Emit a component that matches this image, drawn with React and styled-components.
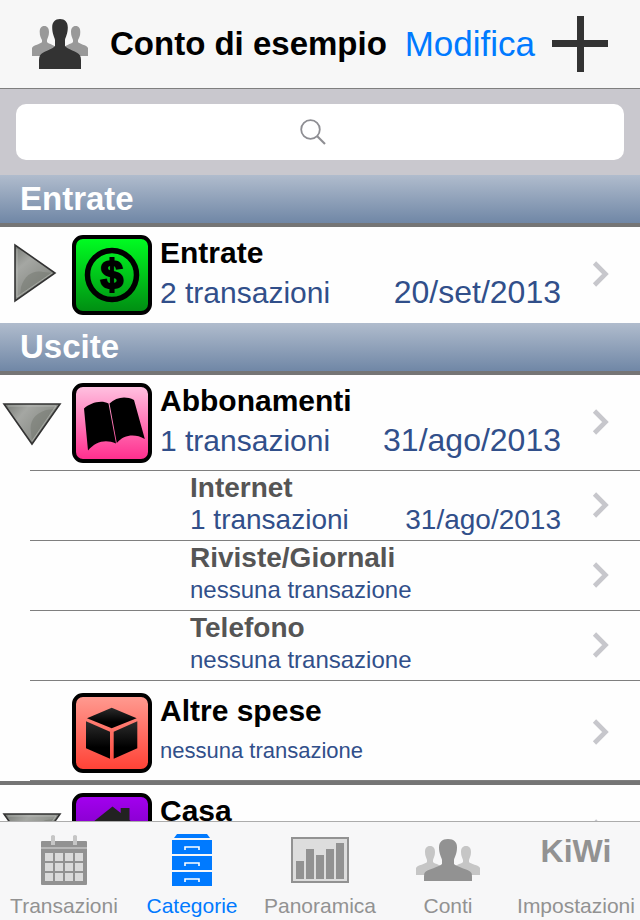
import React from "react";
import styled, { createGlobalStyle, css } from "styled-components";

const GlobalStyle = createGlobalStyle`
* { box-sizing: border-box; }
body {
  margin: 0;
  background: #fefefe;
  font-family: "Liberation Sans", Arial, Helvetica, sans-serif;
}
a { color: inherit; text-decoration: none; }
button {
  padding: 0;
  border: 0;
  background: none;
  font: inherit;
  color: inherit;
  cursor: pointer;
}
svg { display: block; flex: none; }
`;

const Page = styled.div`
display: flex;
flex-direction: column;
height: 100vh;
`;

const Header = styled.header`
display: flex;
align-items: center;
flex: none;
height: 89px;
padding: 0 32px;
background: #f7f7f7;
border-bottom: 1px solid #7f7f7f;
`;

const Title = styled.h1`
flex: 1;
margin: 0 0 0 22px;
font-size: 33px;
line-height: 38px;
white-space: nowrap;
`;

const EditButton = styled.button`
margin-right: 17px;
color: #007aff;
font-size: 35px;
line-height: 38px;
`;

const Content = styled.main`
flex: 1;
min-height: 0;
overflow-y: auto;
scrollbar-width: none;
`;

const SearchBar = styled.form`
padding: 15px 16px;
background: #c9c8ce;
`;

const SearchField = styled.label`
display: grid;
place-items: center;
height: 56px;
background: #fff;
border-radius: 10px;

> * { grid-area: 1 / 1; }
> svg { margin-right: 14px; }
`;

const SearchInput = styled.input`
width: 100%;
height: 100%;
padding: 0 16px;
border: 0;
outline: none;
background: transparent;
font: inherit;
font-size: 28px;
`;

const SectionTitle = styled.h2`
margin: 0;
padding-left: 20px;
height: 52px;
background: linear-gradient(#b0bccd, #7087a6);
background-clip: padding-box;
border-bottom: 4px solid #757575;
color: #fff;
font-size: 33px;
line-height: 48px;
`;

const List = styled.ul`
margin: 0;
padding: 0;
list-style: none;
`;

const Item = styled.li`
&::after {
  content: "";
  display: block;
  height: 1px;
  margin-left: 30px;
  background: ${props => (props.$last ? "transparent" : "#7f7f7f")};
}

${props => props.$group && css`
border-bottom: 4px solid #757575;
`}
`;

const Row = styled.div`
display: flex;
align-items: center;
padding: ${props => (props.$tall ? "12px" : "8px")} 30px 7px 0;
`;

const SubRow = styled.a`
display: flex;
align-items: center;
gap: 31px;
height: 69px;
padding: 1px 30px 0 190px;
`;

const Toggle = styled.button`
width: 64px;
height: 64px;
margin: 0 8px 4px 0;
visibility: ${props => (props.$hidden ? "hidden" : "visible")};

svg { transform: ${props => (props.$open ? "rotate(90deg) scaleY(-1)" : "none")}; }
`;

const RowLink = styled.a`
display: flex;
align-items: center;
flex: 1;
min-width: 0;
`;

const Info = styled.div`
flex: 1;
align-self: flex-start;
min-width: 0;
margin: 0 31px 0 8px;
`;

const SubInfo = styled.div`
flex: 1;
align-self: flex-start;
min-width: 0;
`;

const Name = styled.div`
color: #000;
font-size: 30px;
font-weight: bold;
line-height: 36px;
`;

const SubName = styled(Name)`
color: #555;
font-size: 28px;
line-height: 32px;
`;

const Detail = styled.div`
display: flex;
align-items: baseline;
justify-content: space-between;
color: #314f8a;
font-size: ${props => (props.$empty ? "22px" : "30px")};
line-height: ${props => (props.$empty ? "44px" : "42px")};
white-space: nowrap;
`;

const SubDetail = styled(Detail)`
font-size: ${props => (props.$empty ? "24px" : "28px")};
line-height: 32px;
`;

const DateText = styled.time`
font-size: 32px;
`;

const SubDate = styled.time`
font-size: 28px;
`;

const TabBar = styled.nav`
display: grid;
grid-template-columns: repeat(5, 1fr);
flex: none;
background: #f7f7f8;
border-top: 1px solid #acacac;
`;

const Tab = styled.a`
display: flex;
flex-direction: column;
align-items: center;
padding: 4px 0 2px;
color: ${props => (props.$active ? "#007aff" : "#929292")};
font-size: 21px;
line-height: 24px;
`;

const TabIcon = styled.span`
display: flex;
align-items: center;
justify-content: center;
height: 68px;
`;

const Wordmark = styled.span`
padding-bottom: 18px;
font-size: 32px;
font-weight: bold;
line-height: 32px;
`;

const AccountsIcon = () => (
  <svg width="56" height="50" viewBox="0 0 56 50" aria-hidden="true">
    <g fill="#999">
      <path d="M12.3 7C15.500 7 17 9.500 17 13C17 17 15.500 19 15 21V23C16 25 25 26 25 31V37H0V29C1 26 9 25 10 23V21C9 19 7.700 17 7.700 13C7.700 9.500 9 7 12.300 7Z" />
      <path d="M43.700 7C40.500 7 39 9.500 39 13C39 17 40.500 19 41 21V23C40 25 31 26 31 31V37H56V29C55 26 47 25 46 23V21C47 19 48.300 17 48.300 13C48.300 9.500 47 7 43.700 7Z" />
    </g>
    <path fill="#333" d="M28 0C33 0 35.800 3 35.800 8.500C35.800 15 33.500 18 33 21V27C34.500 30 46 32.500 48 36.500Q49 38 49 41V50H7V41Q7 38 8 36.500C10 32.500 21.500 30 23 27V21C22.500 18 20.200 15 20.200 8.500C20.200 3 23 0 28 0Z" />
  </svg>
);

const PlusIcon = () => (
  <svg width="56" height="56" viewBox="0 0 56 56" aria-hidden="true">
    <path fill="#333" d="M25 0h7v24h24v7H32v25h-7V31H0v-7h25z" />
  </svg>
);

const SearchIcon = () => (
  <svg width="26" height="26" viewBox="0 0 26 26" fill="none" stroke="#8e8e93" strokeWidth="1.8" aria-hidden="true">
    <circle cx="10.500" cy="10.500" r="9.300" />
    <path d="M17 17L25 25" strokeWidth="2.200" />
  </svg>
);

const TriangleIcon = () => (
  <svg width="64" height="64" viewBox="0 0 64 64" aria-hidden="true">
    <defs>
      <linearGradient id="triangle" x1="0" y1="0" x2="0.6" y2="1">
        <stop offset="0" stopColor="#777a75" />
        <stop offset="0.35" stopColor="#a5a7a3" />
        <stop offset="1" stopColor="#7e817b" />
      </linearGradient>
    </defs>
    <path d="M15 4V60L55 32Z" fill="url(#triangle)" stroke="#333" strokeWidth="1.600" />
    <path d="M21 46C25 34 33 29 43 31L53 32L20 55Z" fill="#73776f" opacity="0.500" />
    <path d="M17 8V56L52 32" fill="none" stroke="#c4c6c2" strokeWidth="0.800" opacity="0.700" />
  </svg>
);

const Chevron = () => (
  <svg width="18" height="28" viewBox="0 0 18 28" aria-hidden="true">
    <path d="M2.500 2L13.500 13L2.500 24" fill="none" stroke="#c7c7cc" strokeWidth="4.600" />
  </svg>
);

const symbols = {
  dollar: (
    <>
      <circle cx="40" cy="40" r="24.500" fill="none" stroke="#000" strokeWidth="5.500" />
      <text x="40" y="54" textAnchor="middle" fontFamily="Liberation Sans" fontWeight="bold" fontSize="41" stroke="#000" strokeWidth="1.800">$</text>
      <path d="M37.500 22H42.500V27H37.500ZM37.500 53H42.500V58H37.500Z" />
    </>
  ),
  book: (
    <>
      <path d="M12 25.500C18 20 29 16.500 36.500 20.500L44 60.500C34 56 24 58 16 67.500Z" />
      <path d="M37.500 20.500C44 14.500 53 12.500 62 17L72.800 56C63 50.500 52 51.500 44.800 60Z" />
    </>
  ),
  box: (
    <g fill="url(#ink)">
      <path d="M39.700 14.700L64.700 25.300L39.700 35.300L15 25.300Z" />
      <path d="M14 28.300L38 38.700V65.700L14 55.300Z" />
      <path d="M65.300 28.300L41.700 38.700V65.700L65.300 55.300Z" />
    </g>
  ),
  house: <path fill="#222" d="M40.500 13.500L48.700 20V15H57.500V27L70 37H62V66H19V37H11Z" />
};

const CategoryIcon = ({ symbol, from, to }) => (
  <svg width="80" height="80" viewBox="0 0 80 80" aria-hidden="true">
    <defs>
      <linearGradient id={`tile-${symbol}`} x1="0" y1="0" x2="0" y2="1">
        <stop offset="0" stopColor={from} />
        <stop offset="1" stopColor={to} />
      </linearGradient>
      <linearGradient id="ink" x1="0" y1="0" x2="0" y2="1">
        <stop offset="0" stopColor="#2c2c2c" />
        <stop offset="0.7" stopColor="#000" />
      </linearGradient>
    </defs>
    <rect x="2" y="2" width="76" height="76" rx="9" fill={`url(#tile-${symbol})`} stroke="#000" strokeWidth="4" />
    {symbols[symbol]}
  </svg>
);

const CalendarIcon = () => (
  <svg width="46" height="50" viewBox="0 0 46 50" aria-hidden="true">
    <path fill="#929292" d="M0 7Q0 6 1 6H45Q46 6 46 7V49Q46 50 45 50H1Q0 50 0 49Z" />
    <path fill="#b8b8b8" d="M0 12H46V14H0Z" />
    <path fill="#c6c6c6" d="M10 1Q12-1 14 1V10H10ZM32 1Q34-1 36 1V10H32Z" />
    {[18, 28, 38].map(y => [4, 14, 24, 34].map(x => (
      <rect key={`${x}-${y}`} x={x} y={y} width="8" height="8" fill="#dadada" />
    )))}
  </svg>
);

const CabinetIcon = () => (
  <svg width="40" height="52" viewBox="0 0 40 52" aria-hidden="true">
    <path fill="#007aff" d="M5 0H35L38 4H2Z" />
    {[6, 22, 38].map(y => (
      <g key={y}>
        <rect y={y} width="40" height="14" fill="#007aff" />
        <path d={`M13 ${y + 10}V${y + 7}H27V${y + 10}`} fill="none" stroke="#fff" strokeWidth="1.600" />
      </g>
    ))}
  </svg>
);

const ChartIcon = () => (
  <svg width="58" height="46" viewBox="0 0 58 46" aria-hidden="true">
    <rect x="1" y="1" width="56" height="44" fill="#ddd" stroke="#929292" strokeWidth="2" />
    {[24, 12, 18, 12, 6].map((y, i) => (
      <rect key={i} x={5 + i * 10} y={y} width="8" height={42 - y} fill="#929292" />
    ))}
  </svg>
);

const PeopleIcon = () => (
  <svg width="64" height="42" viewBox="0 0 64 42" aria-hidden="true">
    <g fill="#c6c6c6">
      <path d="M14 7C17.500 7 19 9.500 19 13C19 17 17.500 19 17 21V23C18 25 28 26 28 31V36H0V29C1 26 10 25 11 23V21C10.500 19 9 17 9 13C9 9.500 10.500 7 14 7Z" />
      <path d="M50 7C46.500 7 45 9.500 45 13C45 17 46.500 19 47 21V23C46 25 36 26 36 31V36H64V29C63 26 54 25 53 23V21C53.500 19 55 17 55 13C55 9.500 53.500 7 50 7Z" />
    </g>
    <path fill="#929292" d="M32 0C38 0 41 3 41 8.500C41 15 38.500 18 38 21V25C40 28 53 30 55.500 34Q56 35 56 38V42H8V38Q8 35 8.500 34C11 30 24 28 26 25V21C25.500 18 23 15 23 8.500C23 3 26 0 32 0Z" />
  </svg>
);

const income = [
  { name: "Entrate", detail: "2 transazioni", date: "20/set/2013", symbol: "dollar", from: "#00ff22", to: "#008c12" }
];

const expenses = [
  {
    name: "Abbonamenti",
    detail: "1 transazioni",
    date: "31/ago/2013",
    symbol: "book",
    from: "#ffc4e2",
    to: "#ff2b8c",
    open: true,
    children: [
      { name: "Internet", detail: "1 transazioni", date: "31/ago/2013" },
      { name: "Riviste/Giornali", detail: "nessuna transazione" },
      { name: "Telefono", detail: "nessuna transazione" }
    ]
  },
  { name: "Altre spese", detail: "nessuna transazione", symbol: "box", from: "#ff9c92", to: "#ff4034", leaf: true },
  { name: "Casa", symbol: "house", from: "#a400f0", to: "#6000a0", open: true }
];

const tabs = [
  { label: "Transazioni", icon: <CalendarIcon /> },
  { label: "Categorie", icon: <CabinetIcon />, active: true },
  { label: "Panoramica", icon: <ChartIcon /> },
  { label: "Conti", icon: <PeopleIcon /> },
  { label: "Impostazioni", icon: <Wordmark>KiWi</Wordmark> }
];

const Category = ({ category, last }) => (
  <>
    <Item $last={last} $group={category.leaf}>
      <Row $tall={category.leaf}>
        <Toggle type="button" aria-label={category.name} aria-expanded={!!category.open} $open={category.open} $hidden={category.leaf}>
          <TriangleIcon />
        </Toggle>
        <RowLink href="#">
          <CategoryIcon symbol={category.symbol} from={category.from} to={category.to} />
          <Info>
            <Name>{category.name}</Name>
            {category.detail && <Detail $empty={!category.date}>
              <span>{category.detail}</span>
              {category.date && <DateText>{category.date}</DateText>}
            </Detail>}
          </Info>
          <Chevron />
        </RowLink>
      </Row>
    </Item>
    {category.children && category.children.map(child => (
      <Item key={child.name}>
        <SubRow href="#">
          <SubInfo>
            <SubName>{child.name}</SubName>
            <SubDetail $empty={!child.date}>
              <span>{child.detail}</span>
              {child.date && <SubDate>{child.date}</SubDate>}
            </SubDetail>
          </SubInfo>
          <Chevron />
        </SubRow>
      </Item>
    ))}
  </>
);

const Section = ({ title, categories }) => (
  <section>
    <SectionTitle>{title}</SectionTitle>
    <List>
      {categories.map((category, i) => (
        <Category key={category.name} category={category} last={i === categories.length - 1} />
      ))}
    </List>
  </section>
);

const App = () => (
  <Page>
    <GlobalStyle />
    <Header>
      <button type="button" aria-label="Conti"><AccountsIcon /></button>
      <Title>Conto di esempio</Title>
      <EditButton type="button">Modifica</EditButton>
      <button type="button" aria-label="Aggiungi"><PlusIcon /></button>
    </Header>
    <Content>
      <SearchBar role="search">
        <SearchField>
          <SearchIcon />
          <SearchInput type="text" aria-label="Cerca" />
        </SearchField>
      </SearchBar>
      <Section title="Entrate" categories={income} />
      <Section title="Uscite" categories={expenses} />
    </Content>
    <TabBar>
      {tabs.map(tab => (
        <Tab key={tab.label} href="#" $active={tab.active}>
          <TabIcon>{tab.icon}</TabIcon>
          {tab.label}
        </Tab>
      ))}
    </TabBar>
  </Page>
);

export default App;
